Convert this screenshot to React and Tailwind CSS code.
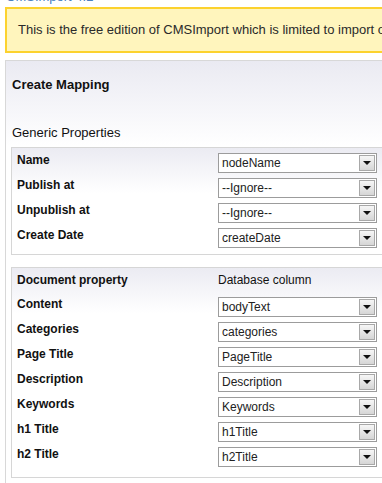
const generic = [
  ['Name', 'nodeName'],
  ['Publish at', '--Ignore--'],
  ['Unpublish at', '--Ignore--'],
  ['Create Date', 'createDate'],
];

const documentProps = [
  ['Content', 'bodyText'],
  ['Categories', 'categories'],
  ['Page Title', 'PageTitle'],
  ['Description', 'Description'],
  ['Keywords', 'Keywords'],
  ['h1 Title', 'h1Title'],
  ['h2 Title', 'h2Title'],
];

function Select({ value }) {
  return (
    <div className="w-[159px] h-[20px] border border-[#9c9c9c] bg-white flex items-center justify-between">
      <span className="pl-[3px] text-[12px] leading-[14px] text-[#222]">{value}</span>
      <span className="w-[16px] h-[16px] mr-[1px] border border-[#a8a8a8] bg-gradient-to-b from-[#f6f6f6] to-[#d6d6d6] flex items-center justify-center">
        <span className="w-0 h-0 border-l-[4px] border-r-[4px] border-t-[4px] border-l-transparent border-r-transparent border-t-[#111]" />
      </span>
    </div>
  );
}

function Row({ label, value }) {
  return (
    <div className="flex h-[25px]">
      <div className="w-[201px] text-[12px] leading-[14px] font-bold text-[#111]">{label}</div>
      <Select value={value} />
    </div>
  );
}

export default function App() {
  return (
    <div className="w-[382px] h-[483px] overflow-hidden bg-white font-['Liberation_Sans',Arial,sans-serif]">
      {/* window title, mostly scrolled off */}
      <div className="h-[7px] overflow-hidden pl-[6px]">
        <div className="-mt-[10px] text-[13px] leading-[14px] text-[#4a7fbf] whitespace-nowrap">CMSImport 4.2</div>
      </div>

      <div className="ml-[5px] w-[520px] h-[46px] border-2 border-[#fcd22e] bg-[#fff5bd] pl-[11px] flex items-center">
        <span className="text-[13px] text-[#2a2a2a] whitespace-nowrap">
          This is the free edition of CMSImport which is limited to import only 500 items
        </span>
      </div>

      <div className="mt-[7px] ml-[5px] w-[520px] border border-[#d8d8d8] bg-[linear-gradient(to_bottom,#eaeaf2_0px,#ffffff_85px)] pl-[5px] pb-[20px]">
        <h2 className="pt-[16px] pl-[1px] text-[13px] leading-[16px] font-bold text-[#111]">Create Mapping</h2>
        <h3 className="mt-[32px] pl-[1px] text-[13px] leading-[16px] text-[#111]">Generic Properties</h3>

        <div className="mt-[6px] border border-[#d6d6d6] bg-[linear-gradient(to_bottom,#ebebf2_0px,#ffffff_45px)] pt-[5px] pb-[1px] pl-[5px]">
          {generic.map(([l, v]) => <Row key={l} label={l} value={v} />)}
        </div>

        <div className="mt-[12px] border border-[#d6d6d6] bg-[linear-gradient(to_bottom,#ebebf2_0px,#ffffff_45px)] pt-[5px] pb-[5px] pl-[5px]">
          <div className="flex h-[24px] text-[12px] leading-[14px] text-[#111]">
            <div className="w-[201px] font-bold">Document property</div>
            <div>Database column</div>
          </div>
          {documentProps.map(([l, v]) => <Row key={l} label={l} value={v} />)}
        </div>
      </div>
    </div>
  );
}
